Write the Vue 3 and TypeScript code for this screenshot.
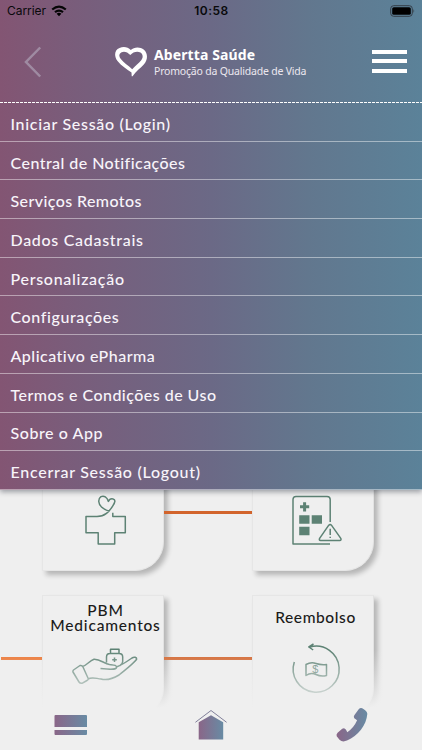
<script setup lang="ts">
import type { Directive } from 'vue'

interface MenuItem {
  label: string
  width: number
}

const menu: MenuItem[] = [
  { label: 'Iniciar Sessão (Login)', width: 159.5 },
  { label: 'Central de Notificações', width: 174.5 },
  { label: 'Serviços Remotos', width: 131 },
  { label: 'Dados Cadastrais', width: 132.5 },
  { label: 'Personalização', width: 113.5 },
  { label: 'Configurações', width: 108 },
  { label: 'Aplicativo ePharma', width: 144.5 },
  { label: 'Termos e Condições de Uso', width: 205.5 },
  { label: 'Sobre o App', width: 92 },
  { label: 'Encerrar Sessão (Logout)', width: 189.5 },
]

// Tracks a label out (or in) so that its longest line spans the given width.
const vFit: Directive<HTMLElement, number> = {
  mounted(el, { value }) {
    const natural = el.getBoundingClientRect().width
    const longest = Math.max(...el.innerText.split('\n').map((line) => line.trim().length))
    el.style.letterSpacing = `${(value - natural) / (longest - 1)}px`
  },
}
</script>

<template>
  <div class="screen">
    <main class="services">
      <div class="row">
        <span class="link lead blank"></span>
        <section class="card">
          <svg class="art" width="60" height="60" viewBox="0 0 60 60">
            <path d="M30.8 25.8V29.6H43.3V45.7H32.7V57H16.200V45.700H4V29.600H15C23 29.400 27 25 30.800 18.800C33 15.500 34 12.500 31 11.900C29 11.500 27.200 12.500 26.400 14.400C25 10 22 8.300 19 9.600C15.500 12 16.500 17.500 19.500 20C21.500 21.800 24 23.200 27.200 24.200" />
          </svg>
        </section>
        <span class="link"></span>
        <section class="card">
          <svg class="art" width="60" height="60" viewBox="0 0 60 60">
            <path d="M38.2 35V12.500Q38.200 9.400 35 9.400H4Q1 9.400 1 12.500V57H38" />
            <path class="solid" d="M11.100 15.200h3v3.100h3.100v3H14.100v3.100h-3v-3.100H8v-3h3.100zM7.200 28.200h10.300v8.600H7.200zM19.700 28.200H30v8.600H19.700zM7.200 39.700h10.300v8.600H7.200z" />
            <path d="M36.600 38.400Q38.100 36.600 39.600 38.400L48.800 51.400Q49.600 53.200 47.700 53.400H28.600Q26.700 53.200 27.600 51.400ZM38.200 41.800V48M38.200 49.700V51.100" />
          </svg>
        </section>
      </div>
      <div class="row">
        <span class="link lead"></span>
        <section class="card">
          <h2 class="title two"><span v-fit="109.5">PBM<br />Medicamentos</span></h2>
          <svg class="hand" width="68" height="40" viewBox="0 0 68 40">
            <path d="M2.500 22L9 17.500Q11 17 12 19L17.200 30.500Q17.500 32 16 32.500L11 35.300Q9 35.600 8 34L2 24Q1.500 23 2.500 22ZM11.500 18.500C16 17.500 18 13 23 11.300C29 11 33 15.500 38.500 16.500C43 17 46 17 45.500 19.500C45 22 39 21.500 29.500 20.500M17 31C21 28.500 25 30.500 30 31C37 33 43 30 48 27C54 22 61 17 65.500 11.500C66 9 63 8.700 61 10C56 13.500 51 17 45.500 19M35.500 14.500V9Q35.500 5.500 39 5.500H48Q51.700 5.500 51.700 9V13.500Q51.700 16 49 17.500M39.500 5V1.200H48V5M43.500 9.500V14M41.200 11.800H45.800" />
          </svg>
        </section>
        <span class="link"></span>
        <section class="card">
          <h2 class="title one"><span v-fit="80">Reembolso</span></h2>
          <svg class="refund" width="54" height="54" viewBox="0 0 54 54">
            <path d="M5.300 20A23 23 0 1 0 21 5M24.500 2L19.800 5L24.200 8M17 22.500Q22 19.800 27 21.500T37.500 22.500V33.500Q32 35 27 32.500T17 33.500Z" />
            <text x="23.300" y="31">$</text>
          </svg>
        </section>
      </div>
    </main>

    <nav class="tabs">
      <svg class="tab wallet" width="34" height="22" viewBox="0 0 34 22">
        <defs>
          <linearGradient id="brand" x1="0" x2="1" y1="0" y2="0">
            <stop offset="0" stop-color="#8a6688" />
            <stop offset="1" stop-color="#688ba4" />
          </linearGradient>
        </defs>
        <path fill="url(#brand)" d="M1.500 1H32Q33 1 33 2V13H.5V2Q.5 1 1.500 1ZM.5 16H33V20Q33 21 32 21H1.500Q.5 21 .5 20Z" />
      </svg>
      <svg class="tab home" width="34" height="32" viewBox="0 0 34 32">
        <path fill="url(#brand)" d="M17 6.200L29.200 13.300V30.500H4.700V13.300Z" />
        <path fill="none" stroke="#81809a" stroke-width="1" d="M1.400 13.300L17 1.500L32.600 13.300" />
      </svg>
      <svg class="tab phone" width="34" height="36" viewBox="0 0 34 36">
        <path fill="url(#brand)" d="M23.700 2.200Q25.800.1 28.400 2Q32.400 4.500 32.300 7C31.500 18 23 29 12 33.600Q7.500 35.600 4.500 32.800L1.700 29.300Q1 27.500 2.600 25.800L7.200 21.800Q9.500 20.300 11 22.800L12.300 25.200Q19 20.500 22.100 13.200L19.300 11.300Q18.300 10 19.300 8.300Z" />
      </svg>
    </nav>

    <div class="drawer">
      <div class="status">
        <div class="carrier">
          <span v-fit="39">Carrier</span>
          <svg width="16" height="12" viewBox="0 0 16 12">
            <path fill="none" stroke="#050506" stroke-width="2.200" d="M1.200 4.500Q8-1.400 14.800 4.500M4 7.200Q8 4 12 7.200" />
            <path d="M5.600 8.700Q8 7 10.400 8.700L8 11.300Z" />
          </svg>
        </div>
        <span v-fit="34" class="clock">10:58</span>
        <svg class="battery" width="26" height="12" viewBox="0 0 26 12">
          <rect x=".7" y=".7" width="21.600" height="10.600" rx="3" fill="none" stroke="#343e48" />
          <rect x="2.200" y="2.200" width="18.600" height="7.600" rx="1.600" />
          <path fill="#343e48" d="M23.500 4Q25 6 23.500 8Z" />
        </svg>
      </div>

      <header class="bar">
        <svg class="back" width="18" height="32" viewBox="0 0 18 32">
          <path d="M16.200 1.500L2 16L16.200 30.500" />
        </svg>
        <div class="brand">
          <svg width="34" height="32" viewBox="0 0 34 32">
            <path fill="#fff" fill-rule="evenodd" d="M16.800 4C20 .8 26 .3 30 3.800C34.300 8 33.700 14 29.800 18.500C26.500 22.300 22 25 18.600 30.200H17.700L17.500 26.400C12.500 23 7.500 20 3.500 15C-.2 10 .4 4 5.500 2C9.500.2 14 1 16.800 4ZM16.300 9C13.500 6.100 10.400 4.900 7.600 6.200C4.700 7.700 4.700 10.600 6.800 13.100C10 16.900 14.200 19.600 18.200 23.200C21.500 19.500 24.700 17.300 27.200 14.200C29.500 11.300 28.900 8.200 26.500 6.500C23.500 4.700 18.900 5.800 16.300 9Z" />
          </svg>
          <div class="words">
            <strong><span v-fit="101">Abertta Saúde</span></strong>
            <small><span v-fit="152.500">Promoção da Qualidade de Vida</span></small>
          </div>
        </div>
        <div class="burger"><i></i><i></i><i></i></div>
      </header>

      <ul class="menu">
        <li v-for="item in menu" :key="item.label">
          <span v-fit="item.width">{{ item.label }}</span>
        </li>
      </ul>
    </div>
  </div>
</template>

<style>
body {
  background: #efefef;
}
</style>

<style scoped>
.screen {
  position: relative;
  width: 422px;
  height: 750px;
  overflow: hidden;
  background: #efefef;
  font-family: Lato, sans-serif;
}
.services {
  display: flex;
  flex-direction: column;
  gap: 24px;
  padding-top: 449px;
}
.row {
  display: flex;
  align-items: center;
}
.link {
  width: 88px;
  height: 3px;
  margin-top: 5px;
  background: #d2642c;
}
.lead {
  width: 41px;
  margin-left: 1px;
  background: #ec7430;
}
.blank {
  background: none;
}
.card {
  box-sizing: border-box;
  display: flex;
  flex-direction: column;
  align-items: center;
  width: 122px;
  height: 122px;
  border: 1px solid #e6e6e6;
  border-right-color: #e2e2e2;
  border-radius: 0 0 29px 0;
  background: #efefef;
  box-shadow: 4px 4px 5px rgba(0, 0, 0, 0.24);
}
.card svg {
  fill: none;
  stroke: #5d8274;
  stroke-width: 1.5;
  stroke-linejoin: round;
}
.art {
  margin: 37px 0 0 17px;
}
.art .solid {
  fill: #5d8274;
  stroke: none;
}
.title {
  display: flex;
  align-items: center;
  justify-content: center;
  height: 42px;
  margin: 0;
  color: #1b1b1b;
  font-size: 15.5px;
  font-weight: 500;
  line-height: 15px;
  text-align: center;
  white-space: nowrap;
}
.one {
  padding-left: 5px;
}
.two {
  align-self: flex-start;
  width: 125px;
  height: 43px;
}
.hand {
  margin: 9px 0 0 3px;
}
.refund {
  margin: 4px 0 0 6px;
}
.refund text {
  font: 11px "Liberation Sans", sans-serif;
  fill: #5d8274;
  stroke: none;
}
.tabs {
  position: absolute;
  inset: 650px 0 0;
  display: flex;
  align-items: flex-end;
  background: linear-gradient(rgba(239, 239, 239, 0), #efefef 58px);
}
.tab {
  display: block;
  margin-bottom: 9px;
}
.wallet {
  margin: 0 0 14px 54px;
}
.home {
  margin-left: 106px;
}
.phone {
  margin: 0 0 7px 107px;
}
.drawer {
  position: absolute;
  inset: 0 0 auto;
  height: 490px;
  background: linear-gradient(90deg, #835573 0, #795d7b 18%, #6b6986 50%, #62778e 73%, #5b8299 100%);
  box-shadow: 0 2px 5px rgba(30, 35, 50, 0.4);
}
.status {
  display: grid;
  grid-template-columns: 1fr auto 1fr;
  align-items: center;
  height: 22px;
  padding: 0 6px 0 7px;
  color: #09090b;
  font: 12px/22px Inter, sans-serif;
}
.carrier {
  display: flex;
  align-items: center;
  gap: 5px;
}
.clock {
  font-weight: 600;
}
.battery {
  justify-self: end;
}
.bar {
  display: flex;
  align-items: center;
  height: 80px;
}
.back {
  margin-left: 24px;
  fill: none;
  stroke: #9f8ba2;
  stroke-width: 2.5;
}
.brand {
  display: flex;
  align-items: center;
  gap: 6px;
  width: 193px;
  margin: -1px 0 0 72px;
  color: #fff;
  font-family: "Noto Sans", sans-serif;
}
.words {
  display: flex;
  flex-direction: column;
  padding-top: 2px;
  white-space: nowrap;
}
.words strong {
  font-size: 14px;
  font-weight: 700;
  line-height: 17px;
}
.words small {
  color: #ece8ef;
  font-size: 10.5px;
  line-height: 16px;
}
.burger {
  display: flex;
  flex-direction: column;
  gap: 5.5px;
  width: 35px;
  margin: -2px 0 0 65px;
}
.burger i {
  height: 4px;
  background: #fff;
}
.menu {
  display: grid;
  grid-template-rows: repeat(10, 38.7px);
  margin: 0;
  padding: 1px 0 0;
  list-style: none;
  background: repeating-linear-gradient(90deg, #fff 0 2.6px, transparent 2.6px 4px) 0 0 / 100% 1px no-repeat;
}
.menu li {
  display: flex;
  align-items: center;
  padding: 3px 0 0 10.5px;
  border-bottom: 1px solid rgba(255, 255, 255, 0.45);
  color: #f8f4fa;
  font-size: 16px;
  font-weight: 500;
  white-space: nowrap;
}
</style>
